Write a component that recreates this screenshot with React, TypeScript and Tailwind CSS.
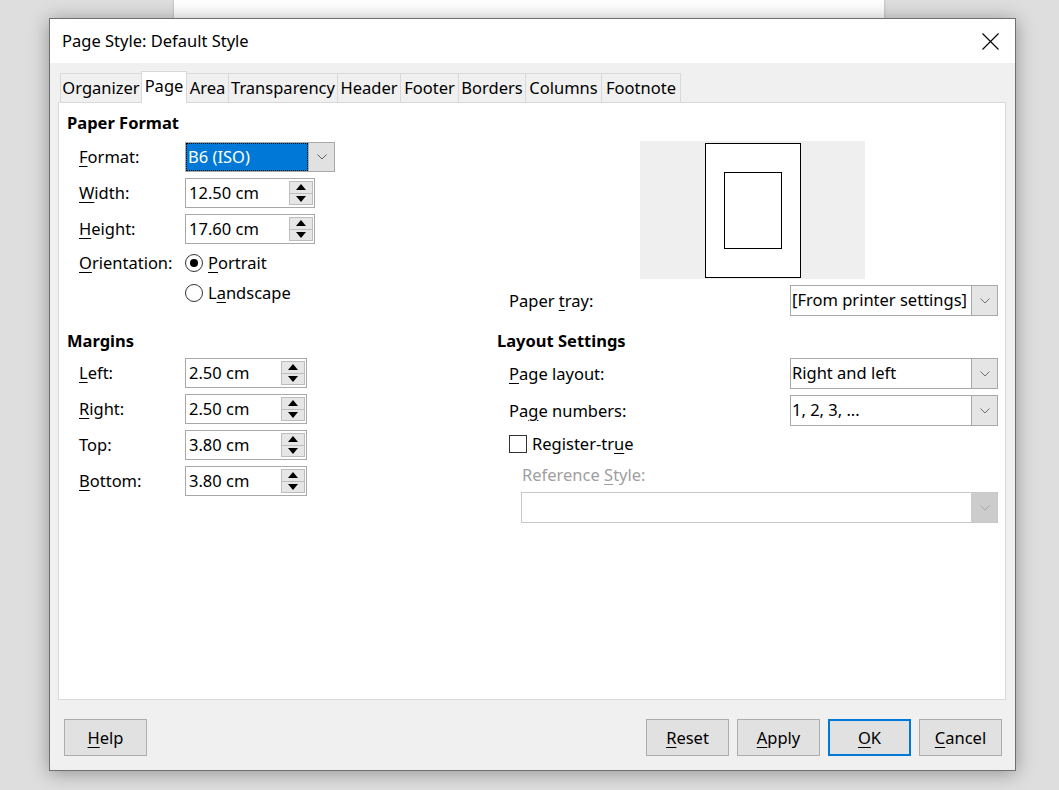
import React from "react";

const U = ({ children }: { children: React.ReactNode }) => (
  <span className="underline underline-offset-[3px] decoration-1">{children}</span>
);

const Chevron = ({ color = "#606060" }: { color?: string }) => (
  <svg width="10" height="6" viewBox="0 0 10 6">
    <polyline points="0.5,0.5 5,5 9.5,0.5" fill="none" stroke={color} strokeWidth="1" />
  </svg>
);

const Arrow = ({ up }: { up?: boolean }) => (
  <svg width="10" height="6" viewBox="0 0 10 6">
    {up ? <polygon points="0,6 5,0 10,6" fill="#000" /> : <polygon points="0,0 10,0 5,6" fill="#000" />}
  </svg>
);

const Spin = ({ value, w }: { value: string; w: string }) => (
  <div className={`flex h-[30px] ${w} border border-[#a9a9a9] bg-white`}>
    <div className="flex-1 flex items-center pl-[3px] leading-none">{value}</div>
    <div className="flex flex-col w-[25px] py-[2px] pr-[1px]">
      <div className="flex-1 flex items-center justify-center bg-[#e6e6e6] border border-[#bdbdbd]">
        <Arrow up />
      </div>
      <div className="flex-1 flex items-center justify-center bg-[#e6e6e6] border border-[#bdbdbd] border-t-0">
        <Arrow />
      </div>
    </div>
  </div>
);

const Combo = ({
  value,
  w,
  h = "h-[31px]",
  disabled,
}: {
  value: string;
  w: string;
  h?: string;
  disabled?: boolean;
}) => (
  <div
    className={`flex ${h} ${w} border ${disabled ? "border-[#c8c8c8]" : "border-[#a9a9a9]"} bg-white`}
  >
    <div className="flex-1 flex items-center pl-[1px] leading-none whitespace-nowrap">{value}</div>
    <div
      className={`w-[26px] flex items-center justify-center border-l ${
        disabled ? "bg-[#cccccc] border-[#cccccc]" : "bg-[#e5e5e5] border-[#a9a9a9]"
      }`}
    >
      <Chevron color={disabled ? "#a8a8a8" : "#707070"} />
    </div>
  </div>
);

const Row = ({ label, children, mt }: { label: React.ReactNode; children: React.ReactNode; mt: string }) => (
  <div className={`flex items-center ${mt} pl-[20px]`}>
    <div className="w-[106px] h-[20px] flex items-center">{label}</div>
    {children}
  </div>
);

const Radio = ({ checked }: { checked?: boolean }) => (
  <div className="w-[18px] h-[18px] rounded-full border border-[#333333] bg-white flex items-center justify-center">
    {checked && <div className="w-[8px] h-[8px] rounded-full bg-black" />}
  </div>
);

const tabs: [string, string, boolean][] = [
  ["Organizer", "w-[82px]", false],
  ["Page", "w-[46px]", true],
  ["Area", "w-[43px]", false],
  ["Transparency", "w-[110px]", false],
  ["Header", "w-[64px]", false],
  ["Footer", "w-[59px]", false],
  ["Borders", "w-[68px]", false],
  ["Columns", "w-[77px]", false],
  ["Footnote", "w-[80px]", false],
];

const Btn = ({ children, primary }: { children: React.ReactNode; primary?: boolean }) => (
  <div
    className={`w-[83px] h-[37px] flex items-center justify-center bg-[#e1e1e1] ${
      primary ? "border-2 border-[#0078d7]" : "border border-[#adadad]"
    }`}
  >
    {children}
  </div>
);

export default function App() {
  return (
    <div className="relative w-[1059px] h-[790px] bg-[#dedede] overflow-hidden font-['Noto_Sans',sans-serif] text-[16.5px] leading-[20px] text-black">
      <div className="absolute left-[174px] top-0 w-[710px] h-[700px] bg-white shadow-[0_0_3px_rgba(0,0,0,0.2)]" />
      <div className="absolute left-[49px] top-[18px] w-[967px] h-[753px] border border-[#6f6f6f] bg-[#f0f0f0] shadow-[0_2px_18px_rgba(0,0,0,0.35)] flex flex-col">
        {/* Title bar */}
        <div className="h-[44px] bg-white flex items-center justify-between pl-[12px] pr-[16px] shrink-0">
          <div className="leading-none">Page Style: Default Style</div>
          <svg width="17" height="17" viewBox="0 0 17 17">
            <line x1="0.5" y1="0.5" x2="16.5" y2="16.5" stroke="#000" strokeWidth="1.1" />
            <line x1="16.5" y1="0.5" x2="0.5" y2="16.5" stroke="#000" strokeWidth="1.1" />
          </svg>
        </div>
        {/* Body */}
        <div className="pl-[8px] pr-[9px] pt-[8px] flex flex-col">
          <div className="flex items-end h-[31px] pl-[2px]">
            {tabs.map(([t, w, sel], i) => (
              <div
                key={t}
                className={`${w} ${i > 0 ? "-ml-px" : ""} flex items-center justify-center border border-b-0 border-[#d9d9d9] leading-none whitespace-nowrap ${
                  sel ? "h-[32px] -mb-px bg-white relative z-10 pb-[2px]" : "h-[29px] bg-[#f0f0f0]"
                }`}
              >
                {t}
              </div>
            ))}
          </div>
          {/* Panel */}
          <div className="h-[598px] bg-white border border-[#d9d9d9] flex">
            {/* Left column */}
            <div className="w-[430px] flex flex-col">
              <div className="mt-[10px] pl-[8px] h-[20px] flex items-center font-bold">Paper Format</div>
              <Row mt="mt-[9px]" label={<><U>F</U>ormat:</>}>
                <div className="flex h-[30px] w-[150px] border border-[#a9a9a9] bg-white">
                  <div className="flex-1 flex items-center bg-[#0078d7] text-white pl-[1px] border border-dotted border-black leading-none">
                    B6 (ISO)
                  </div>
                  <div className="w-[26px] flex items-center justify-center bg-[#e1e1e1] border-l border-[#a9a9a9]">
                    <Chevron />
                  </div>
                </div>
              </Row>
              <Row mt="mt-[6px]" label={<><U>W</U>idth:</>}>
                <Spin value="12.50 cm" w="w-[130px]" />
              </Row>
              <Row mt="mt-[6px]" label={<><U>H</U>eight:</>}>
                <Spin value="17.60 cm" w="w-[130px]" />
              </Row>
              <Row mt="mt-[9px]" label={<><U>O</U>rientation:</>}>
                <div className="flex items-center h-[20px] gap-[5px]">
                  <Radio checked />
                  <span>
                    <U>P</U>ortrait
                  </span>
                </div>
              </Row>
              <div className="flex items-center mt-[10px] pl-[126px] h-[20px] gap-[5px]">
                <Radio />
                <span>
                  L<U>a</U>ndscape
                </span>
              </div>
              <div className="mt-[28px] pl-[8px] h-[20px] flex items-center font-bold">Margins</div>
              <Row mt="mt-[7px]" label={<><U>L</U>eft:</>}>
                <Spin value="2.50 cm" w="w-[122px]" />
              </Row>
              <Row mt="mt-[6px]" label={<><U>R</U>ight:</>}>
                <Spin value="2.50 cm" w="w-[122px]" />
              </Row>
              <Row mt="mt-[6px]" label={<>Top:</>}>
                <Spin value="3.80 cm" w="w-[122px]" />
              </Row>
              <Row mt="mt-[6px]" label={<><U>B</U>ottom:</>}>
                <Spin value="3.80 cm" w="w-[122px]" />
              </Row>
            </div>
            {/* Right column */}
            <div className="flex-1 flex flex-col pr-[7px]">
              <div className="mt-[38px] ml-[151px] w-[225px] h-[138px] bg-[#efefef] flex items-center justify-center">
                <div className="w-[96px] h-[135px] bg-white border border-black flex items-center justify-center">
                  <div className="w-[58px] h-[77px] border border-black" />
                </div>
              </div>
              <div className="mt-[6px] pl-[20px] flex items-center justify-between">
                <span>
                  Paper <U>t</U>ray:
                </span>
                <Combo value="[From printer settings]" w="w-[208px]" />
              </div>
              <div className="mt-[15px] pl-[8px] h-[20px] flex items-center font-bold">Layout Settings</div>
              <div className="mt-[7px] pl-[20px] flex items-center justify-between">
                <span>
                  <U>P</U>age layout:
                </span>
                <Combo value="Right and left" w="w-[208px]" />
              </div>
              <div className="mt-[6px] pl-[20px] flex items-center justify-between">
                <span>
                  Pa<U>g</U>e numbers:
                </span>
                <Combo value="1, 2, 3, ..." w="w-[208px]" />
              </div>
              <div className="mt-[9px] pl-[20px] flex items-center gap-[5px] h-[18px]">
                <div className="w-[18px] h-[18px] border border-[#333333] bg-white" />
                <span className="leading-none">
                  Register-tr<U>u</U>e
                </span>
              </div>
              <div className="mt-[12px] pl-[33px] h-[20px] flex items-center text-[#a0a0a0]">
                <span>
                  Reference <U>S</U>tyle:
                </span>
              </div>
              <div className="mt-[7px] pl-[32px]">
                <Combo value="" w="w-full" disabled />
              </div>
            </div>
          </div>
        </div>
        {/* Buttons */}
        <div className="mt-[19px] pl-[14px] pr-[13px] flex items-center">
          <Btn>
            <span>
              <U>H</U>elp
            </span>
          </Btn>
          <div className="flex-1" />
          <div className="flex gap-[8px]">
            <Btn>
              <span>
                <U>R</U>eset
              </span>
            </Btn>
            <Btn>
              <span>
                <U>A</U>pply
              </span>
            </Btn>
            <Btn primary>
              <span>
                <U>O</U>K
              </span>
            </Btn>
            <Btn>
              <span>
                <U>C</U>ancel
              </span>
            </Btn>
          </div>
        </div>
      </div>
    </div>
  );
}
